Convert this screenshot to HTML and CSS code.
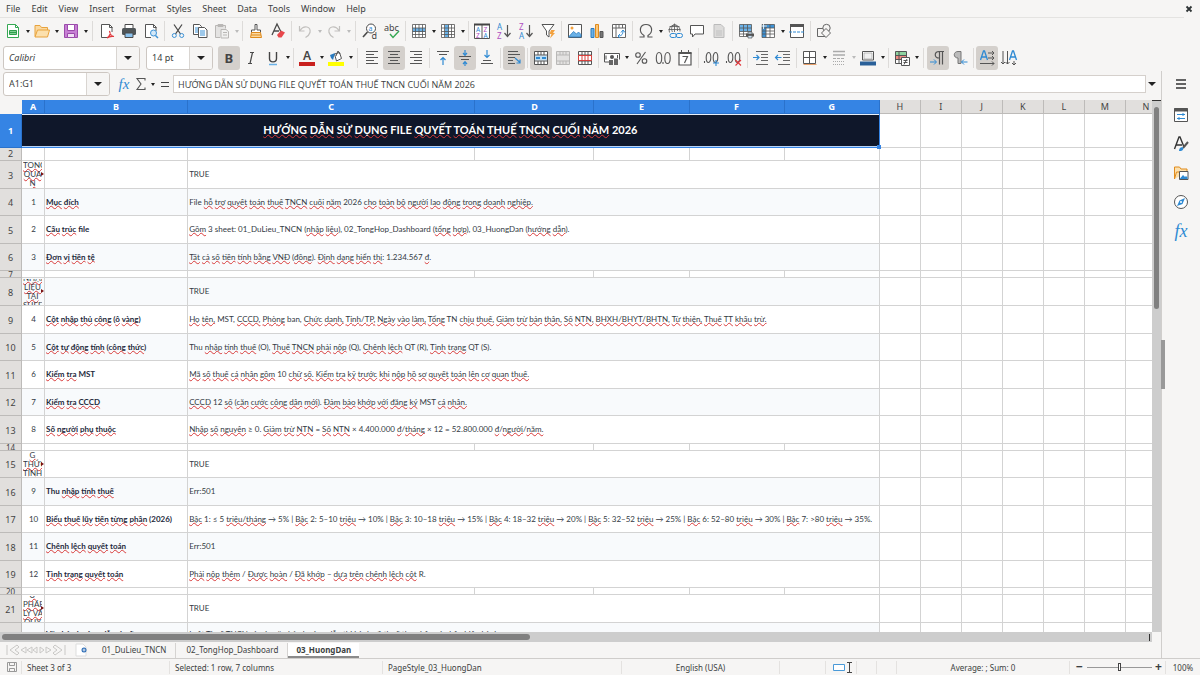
FILE: index.html
```html
<!DOCTYPE html>
<html lang="vi">
<head>
<meta charset="utf-8">
<title>Calc</title>
<link rel="stylesheet" href="styles.css">
</head>
<body>
<nav class="menubar">
<button>File</button><button>Edit</button><button>View</button><button>Insert</button><button>Format</button><button>Styles</button><button>Sheet</button><button>Data</button><button>Tools</button><button>Window</button><button>Help</button>
<button class="close" aria-label="Close document"><svg viewBox="0 0 8 8" class="i8"><path d="M1.500 1.500l5 5M6.500 1.500l-5 5" stroke="#2e3436" stroke-width="1.800"/></svg></button>
</nav>

<div class="toolbar standard" role="toolbar" aria-label="Standard">
<button class="tb" aria-label="New"><svg viewBox="0 0 16 16"><path d="M2.500 1.500h8l3 3v10h-11z" fill="#fff" stroke="#35a853"/><path d="M10.500 1.500v3h3" fill="none" stroke="#35a853"/><path d="M4.500 7.500h7v4h-7zM4.500 9.500h7" fill="#7fd093" stroke="#2f9e4d"/></svg></button><button class="dd" aria-label="New options"></button>
<button class="tb" aria-label="Open"><svg viewBox="0 0 16 16"><path d="M1 13.500v-11h5l1.500 2h6v3" fill="#fbd9a0" stroke="#e8a33d"/><path d="M1 14l2.500-7h12l-2 7z" fill="#fce0ad" stroke="#e8a33d"/></svg></button><button class="dd" aria-label="Open options"></button>
<button class="tb" aria-label="Save"><svg viewBox="0 0 16 16"><path d="M1.500 1.500h13v13h-13z" fill="#c77fd4" stroke="#9b4bab"/><path d="M4.500 1.500h7v6h-7z" fill="#fff" stroke="#9b4bab"/><path d="M4.500 10.500h7v4h-7z" fill="#f0e0f4" stroke="#9b4bab"/></svg></button><button class="dd" aria-label="Save options"></button>
<span class="sep wide"></span>
<button class="tb" aria-label="Export as PDF"><svg viewBox="0 0 16 16"><path d="M9 14.500h-6.500v-13h8l2.500 2.500v5" fill="#fff" stroke="#555"/><path d="M10.500 1.500v3h3" fill="none" stroke="#555"/><path d="M8 15c3-2 3.500-5 2.500-7 .5 4 2 5 4.500 5.500-3-.5-5 0-7 1.500" fill="none" stroke="#e0393e" stroke-width="1.200"/></svg></button>
<button class="tb" aria-label="Print"><svg viewBox="0 0 16 16"><path d="M4 5v-3.500h8v3.500" fill="#fff" stroke="#4a4a4a"/><rect x="1" y="5" width="14" height="7" rx="1.500" fill="#4f5558"/><path d="M4 10h8v4.500h-8z" fill="#8cc3ee" stroke="#4a4a4a"/></svg></button>
<button class="tb" aria-label="Print preview"><svg viewBox="0 0 16 16"><path d="M8 14.500h-5.500v-13h8l2.500 2.500v4" fill="#fff" stroke="#555"/><path d="M10.500 1.500v3h3" fill="none" stroke="#555"/><circle cx="10.500" cy="10" r="3" fill="#d3e8f8" stroke="#3d92d6"/><path d="M12.500 12.500l2.500 2.500" stroke="#3d92d6" stroke-width="1.500"/></svg></button>
<span class="sep"></span>
<button class="tb" aria-label="Cut"><svg viewBox="0 0 16 16" fill="none"><path d="M4 1.500l6.500 9.500M12 1.500l-6.500 9.500" stroke="#4a4a4a" stroke-width="1.300"/><circle cx="4.300" cy="12.500" r="2" stroke="#3d92d6"/><circle cx="11.700" cy="12.500" r="2" stroke="#3d92d6"/></svg></button>
<button class="tb" aria-label="Copy"><svg viewBox="0 0 16 16"><path d="M1.500 1.500h6l2 2v8h-8z" fill="#fff" stroke="#555"/><path d="M3 5h4M3 7h4M3 9h4" stroke="#3d92d6"/><path d="M6.500 4.500h6l2.500 2.500v7.500h-8.500z" fill="#fff" stroke="#555"/><path d="M8 8h5M8 10h5M8 12h5" stroke="#3d92d6"/></svg></button>
<button class="tb" aria-label="Paste"><svg viewBox="0 0 16 16"><path d="M6 14.500h-4.500v-12h10v3M4 1.500h5v2h-5z" fill="#e4e3e2" stroke="#b9b7b5"/><path d="M7 6.500h5l2.500 2v6.500h-7.500zM9 9.500h4M9 12h4" fill="#f1f1f0" stroke="#b9b7b5"/></svg></button><button class="dd off" aria-label="Paste options"></button>
<span class="sep"></span>
<button class="tb" aria-label="Clone formatting"><svg viewBox="0 0 16 16"><path d="M7 1.500h2v5.500h3.500v2.500h-9v-2.500h3.500z" fill="#fff" stroke="#555"/><path d="M3.500 9.500h9l1 5h-11z" fill="#fbd9a0" stroke="#e08b1d"/><path d="M3 12h10" stroke="#e08b1d"/></svg></button>
<button class="tb" aria-label="Clear formatting"><svg viewBox="0 0 16 16"><path d="M2 12l5-11 4 8M4 8h5" fill="none" stroke="#4a4a4a" stroke-width="1.300"/><path d="M7 12l4-4.500 4 2-3.500 5h-3z" fill="#e8484c"/></svg></button>
<span class="sep"></span>
<button class="tb" aria-label="Undo"><svg viewBox="0 0 16 16"><path d="M2.500 3v5h5M3 7.500c4-6 11-4 10 2-.5 2-2 3.500-4.500 5" fill="none" stroke="#c2c0be" stroke-width="1.200"/></svg></button><button class="dd off" aria-label="Undo history"></button>
<button class="tb" aria-label="Redo"><svg viewBox="0 0 16 16"><path d="M13.500 3v5h-5M13 7.500c-4-6-11-4-10 2 .5 2 2 3.500 4.500 5" fill="none" stroke="#c2c0be" stroke-width="1.200"/></svg></button><button class="dd off" aria-label="Redo history"></button>
<span class="sep wide"></span>
<button class="tb" aria-label="Find and replace"><svg viewBox="0 0 16 16"><circle cx="9" cy="5.500" r="4.500" fill="#fff" stroke="#4a4a4a"/><path d="M5.500 9l-4.500 5" stroke="#4a4a4a" stroke-width="1.600"/><text x="6.500" y="8" class="g b" font-size="7">a</text><text x="9.500" y="15.500" class="g" font-size="9">d</text></svg></button>
<button class="tb" aria-label="Spelling"><svg viewBox="0 0 16 16"><text x="0" y="8" class="g" font-size="9">abc</text><path d="M6 11l3 3.500 6-6.500" fill="none" stroke="#35a853" stroke-width="1.400"/></svg></button>
<span class="sep"></span>
<button class="tb" aria-label="Row"><svg viewBox="0 0 16 16"><path d="M1.500 1.500h13v13h-13z" fill="#fff"/><path d="M2 5h12v4h-12z" fill="#6ab1e7"/><path d="M1.500 1.500h13v13h-13zM1.500 5h13M1.500 8.500h13M1.500 11.500h13M4.500 1.500v13M8 1.500v13M11.500 1.500v13" fill="none" stroke="#555" stroke-width=".8"/></svg></button><button class="dd" aria-label="Row options"></button>
<button class="tb" aria-label="Column"><svg viewBox="0 0 16 16"><path d="M1.500 1.500h13v13h-13z" fill="#fff"/><path d="M5 2h4v12h-4z" fill="#6ab1e7"/><path d="M1.500 1.500h13v13h-13zM1.500 5h13M1.500 8.500h13M1.500 11.500h13M4.500 1.500v13M8.500 1.500v13M11.500 1.500v13" fill="none" stroke="#555" stroke-width=".8"/></svg></button><button class="dd" aria-label="Column options"></button>
<span class="sep"></span>
<button class="tb" aria-label="Sort"><svg viewBox="0 0 16 16"><path d="M.5 1.500h15v14h-15zM8 2v13.500" fill="#fff" stroke="#555"/><path d="M0 1.500h16" stroke="#444" stroke-width="2"/><text x="2" y="9" class="g b" font-size="6.500">A</text><text x="2" y="15" class="g p" font-size="6.500">Z</text><text x="9.500" y="9" class="g p" font-size="6.500">Z</text><text x="9.500" y="15" class="g b" font-size="6.500">A</text></svg></button>
<button class="tb" aria-label="Sort ascending"><svg viewBox="0 0 16 16"><text x="1" y="7" class="g b" font-size="8">A</text><text x="1" y="15.500" class="g p" font-size="8">Z</text><path d="M11.500 2v11M8.500 10l3 3.500 3-3.500" fill="none" stroke="#555" stroke-width="1.200"/></svg></button>
<button class="tb" aria-label="Sort descending"><svg viewBox="0 0 16 16"><text x="1" y="7" class="g p" font-size="8">Z</text><text x="1" y="15.500" class="g b" font-size="8">A</text><path d="M11.500 2v11M8.500 10l3 3.500 3-3.500" fill="none" stroke="#555" stroke-width="1.200"/></svg></button>
<button class="tb" aria-label="AutoFilter"><svg viewBox="0 0 16 16"><path d="M2 1.500h12l-5 6.500v6l-2.500-2v-4z" fill="#fff" stroke="#555"/><path d="M11 7h4l-2 3h2l-5 5.500 1.500-4.500h-2z" fill="#f3a13e"/></svg></button>
<span class="sep"></span>
<button class="tb" aria-label="Insert image"><svg viewBox="0 0 16 16"><path d="M1.500 1.500h13v13h-13z" fill="#fff" stroke="#555"/><path d="M2 13.500l4.500-5 3 2.500 2-2 2.500 2.500v2.500h-12z" fill="#6ab1e7" stroke="#2c7cc0" stroke-width=".8"/><circle cx="5" cy="5" r="1.500" fill="#f3a13e"/></svg></button>
<button class="tb" aria-label="Insert chart"><svg viewBox="0 0 16 16"><path d="M2 5.500h3v9h-3z" fill="#6ab1e7" stroke="#2c7cc0"/><path d="M6.500 1.500h3v13h-3z" fill="#fbc77a" stroke="#e08b1d"/><path d="M11 8.500h3v6h-3z" fill="#777" stroke="#555"/></svg></button>
<button class="tb" aria-label="Pivot table"><svg viewBox="0 0 16 16"><path d="M1.500 1.500h13v13h-13zM1.500 5h13M5 1.500v13M8 2v3M11.500 2v3" fill="#fff" stroke="#666"/><path d="M7 13c4 0 5-2 5-5.500M10 9.500l2-2.500 2 2.500M9 11l-2 2 2 2" fill="none" stroke="#2f8ad3"/></svg></button>
<span class="sep"></span>
<button class="tb" aria-label="Special character"><svg viewBox="0 0 16 16"><path d="M1.500 14h4.500v-1.500c-6-4-4-11 2-11s8 7 2 11v1.500h4.500" fill="none" stroke="#555" stroke-width="1.200"/></svg></button><button class="dd" aria-label="Symbols"></button>
<button class="tb" aria-label="Hyperlink"><svg viewBox="0 0 16 16" fill="none"><path d="M2.500 9.500a5.500 5.500 0 1 1 10.500-1M1.500 6.500h12M2.500 3.500h10M7.500 1v8M7.500 1c-4 3-3 6-2 8M7.500 1c3 2 3 4 3 7" stroke="#555" stroke-width=".8"/><rect x="3" y="10.500" width="6.500" height="4" rx="2" stroke="#2f8ad3"/><rect x="9" y="10.500" width="6.500" height="4" rx="2" stroke="#2f8ad3"/></svg></button>
<button class="tb" aria-label="Comment"><svg viewBox="0 0 16 16"><path d="M1.500 2.500h13v8.500h-8.500l-2.500 3v-3h-2z" fill="#fff" stroke="#555"/></svg></button>
<button class="tb" aria-label="Headers and footers"><svg viewBox="0 0 16 16"><path d="M3 1.500h7l3 3v10h-10z" fill="#dcdbda" stroke="#bbb"/><path d="M5 8h6M5 10h6M5 12h6" stroke="#c2c2c2"/></svg></button>
<span class="sep"></span>
<button class="tb" aria-label="Print area"><svg viewBox="0 0 16 16"><path d="M1.500 1.500h12v12h-12z" fill="#fff"/><path d="M1.500 1.500h12v7h-12z" fill="#6ab1e7"/><path d="M1.500 1.500h12v12h-12zM1.500 5h12M1.500 8.500h12M1.500 11h8M5.500 1.500v12M9.500 1.500v7" fill="none" stroke="#555" stroke-width=".8"/><path d="M8 10.500h8v3h-8z" fill="#555"/><path d="M10 9h4v2h-4zM10 12.500h4v2.500h-4z" fill="#cfe5f7" stroke="#555" stroke-width=".7"/></svg></button>
<button class="tb" aria-label="Freeze"><svg viewBox="0 0 16 16"><path d="M2 2h12.500v12.500h-12.500z" fill="#fff"/><path d="M2 1.500h12.500v3.500h-8.500v9.500h-4z" fill="#3d92d6"/><path d="M2 1.500h12.500v13h-12.500zM2 5h12.500M2 8h12.500M2 11h12.500M6 1.500v13M10 1.500v13" fill="none" stroke="#555" stroke-width=".8"/><path d="M3.500 0v6M1 3h6" stroke="#fff" stroke-width=".8"/></svg></button><button class="dd" aria-label="Freeze options"></button>
<button class="tb" aria-label="Split window"><svg viewBox="0 0 16 16"><path d="M1.500 1.500h13v13h-13z" fill="#fff" stroke="#555"/><path d="M1 2.500h14" stroke="#555" stroke-width="3"/><path d="M0 9h16" stroke="#2f8ad3" stroke-dasharray="3 1"/></svg></button>
<span class="sep"></span>
<button class="tb" aria-label="Shapes"><svg viewBox="0 0 16 16"><path d="M1.500 5.500h8v8h-8z" fill="#f6f5f4" stroke="#666"/><circle cx="10.500" cy="5" r="3.700" fill="#f6f5f4" stroke="#666"/><path d="M10 5.500l4.500 4.500-4.500 4.500-4.500-4.500z" fill="#f6f5f4" stroke="#666"/></svg></button>
</div>

<div class="toolbar format" role="toolbar" aria-label="Formatting">
<div class="combo font"><input aria-label="Font name" value="Calibri"><button aria-label="Fonts"></button></div>
<div class="combo size"><input aria-label="Font size" value="14 pt"><button aria-label="Sizes"></button></div>
<button class="tb on" aria-label="Bold"><svg viewBox="0 0 16 16"><text x="3.500" y="13" class="g" font-size="13" font-weight="700">B</text></svg></button>
<button class="tb" aria-label="Italic"><svg viewBox="0 0 16 16"><path d="M7 2.500h4M5 13.500h4M9.500 2.500l-2.500 11" stroke="#4a4a4a" stroke-width="1.200"/></svg></button>
<button class="tb" aria-label="Underline"><svg viewBox="0 0 16 16"><path d="M4.500 2v6.500c0 4.500 7 4.500 7 0v-6.500" fill="none" stroke="#444" stroke-width="1.400"/><path d="M4 14.500h8" stroke="#6ab1e7" stroke-width="1.500"/></svg></button><button class="dd" aria-label="Underline options"></button>
<span class="sep"></span>
<button class="tb" aria-label="Font color"><svg viewBox="0 0 16 16"><text x="4" y="10" class="g" font-size="12" font-weight="600">A</text><path d="M0 12h16v4h-16z" fill="#c9211e"/></svg></button><button class="dd" aria-label="Font colors"></button>
<button class="tb" aria-label="Highlighting"><svg viewBox="0 0 16 16"><path d="M6.500 4l5-1.500 2 6-5 2.500z" fill="#fff" stroke="#555"/><path d="M8 6l2-5 2 3" fill="none" stroke="#555"/><path d="M2 5l5-2-2 7-2-2z" fill="#2c7cc0"/><path d="M0 12h16v4h-16z" fill="#ff0"/></svg></button><button class="dd" aria-label="Highlight colors"></button>
<span class="sep wide"></span>
<button class="tb" aria-label="Align left"><svg viewBox="0 0 16 16"><path d="M2 1.500h12M2 4.500h8M2 7.500h12M2 10.500h8M2 13.500h12" stroke="#555"/></svg></button>
<button class="tb on" aria-label="Center"><svg viewBox="0 0 16 16"><path d="M2 1.500h12M4 4.500h8M2 7.500h12M4 10.500h8M2 13.500h12" stroke="#555"/></svg></button>
<button class="tb" aria-label="Align right"><svg viewBox="0 0 16 16"><path d="M2 1.500h12M6 4.500h8M2 7.500h12M6 10.500h8M2 13.500h12" stroke="#555"/></svg></button>
<span class="sep"></span>
<button class="tb" aria-label="Align top"><svg viewBox="0 0 16 16" fill="none"><path d="M2 1.500h12M4 4.500h8" stroke="#555"/><path d="M8 15v-7.500M5.500 10l2.500-2.500 2.500 2.500" stroke="#2f8ad3" stroke-width="1.200"/></svg></button>
<button class="tb on" aria-label="Center vertically"><svg viewBox="0 0 16 16" fill="none"><path d="M2 6.500h12M4 9.500h8" stroke="#555"/><path d="M8 0v5M6 3l2 2.300 2-2.300M8 16v-4.500M6 14l2-2.300 2 2.300" stroke="#2f8ad3" stroke-width="1.200"/></svg></button>
<button class="tb" aria-label="Align bottom"><svg viewBox="0 0 16 16" fill="none"><path d="M4 10.500h8M2 13.500h12" stroke="#555"/><path d="M8 0v7M5.500 5l2.500 2.500 2.500-2.500" stroke="#2f8ad3" stroke-width="1.200"/></svg></button>
<span class="sep"></span>
<button class="tb on" aria-label="Wrap text"><svg viewBox="0 0 16 16" fill="none"><path d="M2 1.500h10M2 4.500h12M2 7.500h7M2 10.500h5M2 13.500h7" stroke="#555"/><path d="M9 8l5 4.500M14 9.500v3.500h-3.500" stroke="#2f8ad3" stroke-width="1.200"/></svg></button>
<span class="sep"></span>
<button class="tb on" aria-label="Merge and center"><svg viewBox="0 0 16 16"><path d="M1.500 1.500h13v13h-13z" fill="#fff"/><path d="M1.500 5.500h13v5h-13z" fill="#bfdff5"/><path d="M1.500 1.500h13v13h-13zM1.500 5h13M1.500 11h13M5 1.500v3.500M8 1.500v3.500M11 1.500v3.500M5 11v3.500M8 11v3.500M11 11v3.500" fill="none" stroke="#555"/><path d="M3 8h4M9 8h4" stroke="#2f8ad3" stroke-width="1.800"/></svg></button>
<button class="tb" aria-label="Merge cells"><svg viewBox="0 0 16 16"><path d="M1.500 1.500h13v13h-13zM1.500 5h13M1.500 11h13M5 1.500v3.500M8 1.500v3.500M11 1.500v3.500M5 11v3.500M8 11v3.500M11 11v3.500" fill="#e3e2e1" stroke="#b9b8b7"/></svg></button>
<button class="tb" aria-label="Unmerge cells"><svg viewBox="0 0 16 16"><path d="M1.500 1.500h13v13h-13zM1.500 5h13M5 1.500v3.500M8 1.500v3.500M11 1.500v3.500M1.500 11h13M5 11v3.500M8 11v3.500M11 11v3.500" fill="#fff" stroke="#555"/><path d="M1.500 5.500h13v5h-13zM5 5.500v5M8 5.500v5M11 5.500v5" fill="#fff" stroke="#d8403c"/></svg></button>
<span class="sep"></span>
<button class="tb" aria-label="Currency"><svg viewBox="0 0 16 16"><path d="M8 12h-7.500v-8.500h15v6" fill="#fff" stroke="#555"/><circle cx="8" cy="7" r="2" fill="#555"/><path d="M2 5.500v4M13.500 5v3" stroke="#555"/><path d="M5 10h4v5h-4zM10 8.500h4v6.500h-4z" fill="#666"/></svg></button><button class="dd" aria-label="Currencies"></button>
<button class="tb" aria-label="Percent"><svg viewBox="0 0 16 16" fill="none" stroke="#555" stroke-width="1.100"><circle cx="5" cy="5" r="2.300"/><circle cx="11.500" cy="11" r="2.300"/><path d="M12.500 2l-8.500 12"/></svg></button>
<button class="tb" aria-label="Number"><svg viewBox="0 0 16 16" fill="none" stroke="#555" stroke-width="1.100"><ellipse cx="4" cy="8" rx="2.700" ry="5.500"/><ellipse cx="12.500" cy="8" rx="2.700" ry="5.500"/><path d="M8 12v2"/></svg></button>
<button class="tb" aria-label="Date"><svg viewBox="0 0 16 16"><path d="M2 3h12v12h-12z" fill="#fff" stroke="#555" stroke-width="1.200"/><path d="M1.500 3h13" stroke="#555" stroke-width="2"/><path d="M4.500 0v3M11.500 0v3" stroke="#555"/><path d="M5.500 6.500h5l-3 6.500" fill="none" stroke="#555" stroke-width="1.200"/></svg></button>
<span class="sep"></span>
<button class="tb" aria-label="Add decimal place"><svg viewBox="0 0 16 16" fill="none" stroke="#555" stroke-width="1.100"><path d="M.5 11v2"/><ellipse cx="4.500" cy="7.500" rx="2.300" ry="5"/><ellipse cx="11.500" cy="7.500" rx="2.300" ry="5"/><path d="M12 10v6M9 13h6" stroke="#2f8ad3"/></svg></button>
<button class="tb" aria-label="Delete decimal place"><svg viewBox="0 0 16 16" fill="none" stroke="#555" stroke-width="1.100"><path d="M.5 11v2"/><ellipse cx="4.500" cy="7.500" rx="2.300" ry="5"/><ellipse cx="11.500" cy="7.500" rx="2.300" ry="5"/><path d="M9.500 10l5.500 5.500M15 10l-5.500 5.500" stroke="#e0393e"/></svg></button>
<span class="sep"></span>
<button class="tb" aria-label="Increase indent"><svg viewBox="0 0 16 16" fill="none"><path d="M3 1.500h12M8 4.500h7M8 7.500h7M8 10.500h7M3 14.500h12" stroke="#666"/><path d="M0 7.500h6M3.500 5l2.500 2.500-2.500 2.500" stroke="#2f8ad3" stroke-width="1.200"/></svg></button>
<button class="tb" aria-label="Decrease indent"><svg viewBox="0 0 16 16" fill="none"><path d="M3 1.500h12M8 4.500h7M8 7.500h7M8 10.500h7M3 14.500h12" stroke="#666"/><path d="M6.500 7.500h-6M3 5l-2.500 2.500 2.500 2.500" stroke="#2f8ad3" stroke-width="1.200"/></svg></button>
<span class="sep"></span>
<button class="tb" aria-label="Borders"><svg viewBox="0 0 16 16"><path d="M1.500 1.500h12v12h-12zM7.500 1.500v12M1.500 7.500h12" fill="#fff" stroke="#555"/><path d="M1.500 14.500h13" stroke="#e8a06a"/></svg></button><button class="dd" aria-label="Border options"></button>
<button class="tb" aria-label="Border style"><svg viewBox="0 0 16 16" stroke="#aaa"><path d="M2 1.500h12M2 5h12" stroke-width="1.300"/><path d="M2 8.500h12" stroke-dasharray="3 1"/><path d="M2 11.500h12M2 14.500h12" stroke-dasharray="1 1"/></svg></button><button class="dd off" aria-label="Border style options"></button>
<button class="tb" aria-label="Border color"><svg viewBox="0 0 16 16"><path d="M2.500 1.500h11v8.500h-11z" fill="#fff" stroke="#555"/><path d="M4 3h8v6h-8z" fill="#f0f0f0" stroke="#999" stroke-width=".6"/><path d="M0 11.500h16v4h-16z" fill="#2a6099"/></svg></button><button class="dd" aria-label="Border colors"></button>
<span class="sep"></span>
<button class="tb" aria-label="Conditional formatting"><svg viewBox="0 0 16 16"><path d="M1.500 1.500h11v12h-11z" fill="#fff"/><path d="M1.500 1.500h11v4h-11z" fill="#8fd3a0"/><path d="M1.500 5.500h11v4h-11z" fill="#f08c84"/><path d="M1.500 1.500h11v12h-11zM1.500 5.500h11M1.500 9.500h11M5 1.500v12" fill="none" stroke="#555"/><path d="M7.500 7.500h8v8h-8zM9.500 10.500h4M9.500 12.500h4M13 9l-3 5.500" fill="#fff" stroke="#555"/></svg></button><button class="dd" aria-label="Conditional options"></button>
<span class="sep wide"></span>
<button class="tb on" aria-label="Left to right"><svg viewBox="0 0 16 16" fill="none"><path d="M9 8c-5 0-5-6.500 0-6.500h5M9.500 1.500v13M12.500 1.500v13" stroke="#555" stroke-width="1.200"/><path d="M0 12h6M4 9.500l2.500 2.500-2.500 2.500" stroke="#2f8ad3"/></svg></button>
<button class="tb" aria-label="Right to left"><svg viewBox="0 0 16 16"><path d="M6 8c-5 0-5-6.500 0-6.500h3v12h-3z" fill="#bbb" stroke="#777"/><path d="M15.500 12h-6M12 9.500l-2.500 2.500 2.500 2.500" fill="none" stroke="#2f8ad3"/></svg></button>
<span class="sep"></span>
<button class="tb on" aria-label="Text left to right"><svg viewBox="0 0 16 16" fill="none"><path d="M1.500 10l3-9h1l3 9M2.500 7h5" stroke="#2f8ad3" stroke-width="1.300"/><path d="M9 3h6M13 1l2 2-2 2M9 8h6M13 6l2 2-2 2M1 13.500h14M13 11.500l2 2-2 2" stroke="#555"/></svg></button>
<button class="tb" aria-label="Text top to bottom"><svg viewBox="0 0 16 16" fill="none"><path d="M8.500 10l3-9h1l3 9M9.500 7h5" stroke="#2f8ad3" stroke-width="1.300"/><path d="M2 1v13M0 12l2 2 2-2M6.500 1v13M4.500 12l2 2 2-2M13 11v4M11 13l2 2 2-2" stroke="#555"/></svg></button>
</div>

<div class="main">
<main class="work">
<div class="formula">
<div class="combo name"><input aria-label="Name box" value="A1:G1"><button aria-label="Named ranges"></button></div>
<button class="fx" aria-label="Function wizard">fx</button>
<button class="sum" aria-label="Select function"><svg viewBox="0 0 10 12" class="sigma"><path d="M9 2.500v-2h-8l4 5.500-4 5.500h8v-2" fill="none" stroke="#555" stroke-width="1.100"/></svg></button><button class="dd" aria-label="Sum options"></button>
<button class="eq" aria-label="Formula"></button>
<input class="line" aria-label="Input line" value="HƯỚNG DẪN SỬ DỤNG FILE QUYẾT TOÁN THUẾ TNCN CUỐI NĂM 2026">
<button class="expand" aria-label="Expand formula bar"></button>
</div>
<div class="sheetrow">
<div class="sheet">
<table>
<colgroup><col class="ch"><col class="ca"><col class="cb"><col class="cc"><col class="cd"><col class="ce"><col class="ce"><col class="ce"><col class="cx"><col class="cx"><col class="cx"><col class="cx"><col class="cx"><col class="cx"><col class="cx"></colgroup>
<thead><tr><th class="corner"></th><th class="sel">A</th><th class="sel">B</th><th class="sel">C</th><th class="sel">D</th><th class="sel">E</th><th class="sel">F</th><th class="sel">G</th><th>H</th><th>I</th><th>J</th><th>K</th><th>L</th><th>M</th><th>N</th></tr></thead>
<tbody>
<tr class="title"><th class="sel">1</th><td colspan="7" class="banner"><u>HƯỚNG</u> <u>DẪN</u> <u>SỬ</u> <u>DỤNG</u> FILE <u>QUYẾT</u> <u>TOÁN</u> <u>THUẾ</u> <u>TNCN</u> <u>CUỐI</u> <u>NĂM</u> 2026<i class="handle"></i></td><td><td><td><td><td><td><td></tr>
<tr class="blank"><th>2</th><td><td><td><td><td><td><td><td><td><td><td><td><td><td></tr>
<tr class="tall"><th>3</th><td class="sec"><div><u>TỔNG</u><u>QUA</u><u>N</u></div><td><td colspan="5">TRUE<td><td><td><td><td><td><td></tr>
<tr class="mid alt"><th>4</th><td class="no">1<td class="k"><u>Mục</u> <u>đích</u><td colspan="5">File <u>hỗ</u> <u>trợ</u> <u>quyết</u> <u>toán</u> <u>thuế</u> <u>TNCN</u> <u>cuối</u> <u>năm</u> 2026 <u>cho</u> <u>toàn</u> <u>bộ</u> <u>người</u> <u>lao</u> <u>động</u> <u>trong</u> <u>doanh</u> <u>nghiệp.</u><td><td><td><td><td><td><td></tr>
<tr class="tall"><th>5</th><td class="no">2<td class="k"><u>Cấu</u> <u>trúc</u> file<td colspan="5"><u>Gồm</u> 3 sheet: 01_DuLieu_TNCN (<u>nhập</u> <u>liệu</u>), 02_TongHop_Dashboard (<u>tổng</u> <u>hợp</u>), 03_HuongDan (<u>hướng</u> <u>dẫn</u>).<td><td><td><td><td><td><td></tr>
<tr class="mid alt"><th>6</th><td class="no">3<td class="k"><u>Đơn</u> <u>vị</u> <u>tiền</u> <u>tệ</u><td colspan="5"><u>Tất</u> <u>cả</u> <u>số</u> <u>tiền</u> <u>tính</u> <u>bằng</u> <u>VNĐ</u> (<u>đồng</u>). <u>Định</u> <u>dạng</u> <u>hiển</u> <u>thị</u>: 1.234.567 <u>đ</u>.<td><td><td><td><td><td><td></tr>
<tr class="thin"><th>7</th><td><td><td><td><td><td><td><td><td><td><td><td><td><td></tr>
<tr class="tall alt"><th>8</th><td class="sec"><div><u>NHẬP</u><u>LIỆU</u><u>TẠI</u><u>SHEET</u></div><td><td colspan="5">TRUE<td><td><td><td><td><td><td></tr>
<tr class="tall"><th>9</th><td class="no">4<td class="k"><u>Cột</u> <u>nhập</u> <u>thủ</u> <u>công</u> (<u>ô</u> <u>vàng</u>)<td colspan="5"><u>Họ</u> <u>tên,</u> MST, <u>CCCD,</u> <u>Phòng</u> ban, <u>Chức</u> <u>danh,</u> <u>Tỉnh/TP,</u> <u>Ngày</u> <u>vào</u> <u>làm,</u> <u>Tổng</u> TN <u>chịu</u> <u>thuế,</u> <u>Giảm</u> <u>trừ</u> <u>bản</u> <u>thân,</u> <u>Số</u> <u>NTN,</u> <u>BHXH/BHYT/BHTN,</u> <u>Từ</u> <u>thiện,</u> <u>Thuế</u> <u>TT</u> <u>khấu</u> <u>trừ.</u><td><td><td><td><td><td><td></tr>
<tr class="mid alt"><th>10</th><td class="no">5<td class="k"><u>Cột</u> <u>tự</u> <u>động</u> <u>tính</u> (<u>công</u> <u>thức</u>)<td colspan="5">Thu <u>nhập</u> <u>tính</u> <u>thuế</u> (O), <u>Thuế</u> <u>TNCN</u> <u>phải</u> <u>nộp</u> (Q), <u>Chênh</u> <u>lệch</u> QT (R), <u>Tình</u> <u>trạng</u> QT (S).<td><td><td><td><td><td><td></tr>
<tr class="tall"><th>11</th><td class="no">6<td class="k"><u>Kiểm</u> <u>tra</u> MST<td colspan="5"><u>Mã</u> <u>số</u> <u>thuế</u> <u>cá</u> <u>nhân</u> <u>gồm</u> 10 <u>chữ</u> <u>số.</u> <u>Kiểm</u> <u>tra</u> <u>kỹ</u> <u>trước</u> <u>khi</u> <u>nộp</u> <u>hồ</u> <u>sơ</u> <u>quyết</u> <u>toán</u> <u>lên</u> <u>cơ</u> <u>quan</u> <u>thuế.</u><td><td><td><td><td><td><td></tr>
<tr class="mid alt"><th>12</th><td class="no">7<td class="k"><u>Kiểm</u> <u>tra</u> <u>CCCD</u><td colspan="5"><u>CCCD</u> 12 <u>số</u> (<u>căn</u> <u>cước</u> <u>công</u> <u>dân</u> <u>mới</u>). <u>Đảm</u> <u>bảo</u> <u>khớp</u> <u>với</u> <u>đăng</u> <u>ký</u> MST <u>cá</u> <u>nhân.</u><td><td><td><td><td><td><td></tr>
<tr class="tall"><th>13</th><td class="no">8<td class="k"><u>Số</u> <u>người</u> <u>phụ</u> <u>thuộc</u><td colspan="5"><u>Nhập</u> <u>số</u> <u>nguyên</u> ≥ 0. <u>Giảm</u> <u>trừ</u> <u>NTN</u> = <u>Số</u> <u>NTN</u> × 4.400.000 <u>đ</u>/<u>tháng</u> × 12 = 52.800.000 <u>đ</u>/<u>người</u>/<u>năm.</u><td><td><td><td><td><td><td></tr>
<tr class="thin"><th>14</th><td><td><td><td><td><td><td><td><td><td><td><td><td><td></tr>
<tr class="mid"><th>15</th><td class="sec"><div><u>G</u><u>THỨC</u><u>TÍNH</u></div><td><td colspan="5">TRUE<td><td><td><td><td><td><td></tr>
<tr class="tall alt"><th>16</th><td class="no">9<td class="k">Thu <u>nhập</u> <u>tính</u> <u>thuế</u><td colspan="5">Err:501<td><td><td><td><td><td><td></tr>
<tr class="mid"><th>17</th><td class="no">10<td class="k"><u>Biểu</u> <u>thuế</u> <u>lũy</u> <u>tiến</u> <u>từng</u> <u>phần</u> (2026)<td colspan="5"><u>Bậc</u> 1: ≤ 5 <u>triệu/tháng</u> → 5% | <u>Bậc</u> 2: 5–10 <u>triệu</u> → 10% | <u>Bậc</u> 3: 10–18 <u>triệu</u> → 15% | <u>Bậc</u> 4: 18–32 <u>triệu</u> → 20% | <u>Bậc</u> 5: 32–52 <u>triệu</u> → 25% | <u>Bậc</u> 6: 52–80 <u>triệu</u> → 30% | <u>Bậc</u> 7: &gt;80 <u>triệu</u> → 35%.<td><td><td><td><td><td><td></tr>
<tr class="tall alt"><th>18</th><td class="no">11<td class="k"><u>Chênh</u> <u>lệch</u> <u>quyết</u> <u>toán</u><td colspan="5">Err:501<td><td><td><td><td><td><td></tr>
<tr class="mid"><th>19</th><td class="no">12<td class="k"><u>Tình</u> <u>trạng</u> <u>quyết</u> <u>toán</u><td colspan="5"><u>Phải</u> <u>nộp</u> <u>thêm</u> / <u>Được</u> <u>hoàn</u> / <u>Đã</u> <u>khớp</u> – <u>dựa</u> <u>trên</u> <u>chênh</u> <u>lệch</u> <u>cột</u> R.<td><td><td><td><td><td><td></tr>
<tr class="thin"><th>20</th><td><td><td><td><td><td><td><td><td><td><td><td><td><td></tr>
<tr class="tall"><th>21</th><td class="sec"><div><u>Ứ</u><u>PHÁP</u><u>LÝ VÀ</u><u>QUY</u></div><td><td colspan="5">TRUE<td><td><td><td><td><td><td></tr>
<tr class="mid alt peek"><th></th><td><td class="k">Văn bản hướng dẫn thuế<td colspan="5">Luật Thuế TNCN và các văn bản hướng dẫn thi hành về thuế thu nhập cá nhân hiện hành.<td><td><td><td><td><td><td></tr>
</tbody>
</table>
</div>
<div class="vscroll"><i></i></div>
</div>
<div class="hscroll"><i></i><b></b></div>
<div class="tabs">
<svg class="navs" viewBox="0 0 60 12" fill="none" stroke="#c9c8c6"><path d="M1 1v10M11 1l-7 5 7 5 2-2-4-3 4-3zM20 3l-5 3 5 3zM26 3l-5 3 5 3zM31 3v6l-4-3zM34 3v6l4-3zM40 3v6l5-3zM49 1l7 5-7 5-2-2 4-3-4-3zM59 1v10"/></svg>
<button class="add" aria-label="Add sheet"><svg viewBox="0 0 12 14"><path d="M1 1h7l3 3v9h-10z" fill="#fff" stroke="#ddd"/><circle cx="9" cy="7" r="2.500" fill="#2c6cb5"/><path d="M9 5.500v3M7.500 7h3" stroke="#fff" stroke-width=".8"/></svg></button>
<button class="tab">01_DuLieu_TNCN</button><button class="tab">02_TongHop_Dashboard</button><button class="tab active">03_HuongDan</button>
</div>
</main>
<aside class="side">
<button aria-label="Sidebar settings"><svg viewBox="0 0 16 16"><path d="M3 4h10M3 8h10M3 12h10" stroke="#333" stroke-width="1.500"/></svg></button>
<button aria-label="Properties"><svg viewBox="0 0 16 16"><path d="M1.500 1.500h13v13h-13z" fill="#fff" stroke="#555"/><path d="M1 3h14" stroke="#555" stroke-width="3"/><path d="M4 7.500h8M4 11.500h8M10 6v3M6 10v3" stroke="#2f8ad3"/></svg></button>
<button aria-label="Styles"><svg viewBox="0 0 16 16"><path d="M1.500 13l4.500-12h1l4 10M3 9h6" fill="none" stroke="#333" stroke-width="1.400"/><path d="M15 6l-5 6" stroke="#555" stroke-width="2"/><path d="M6 15c0-3 2-4.500 4-3.500 1 2-1 4-4 3.500z" fill="#2f8ad3"/></svg></button>
<button aria-label="Gallery"><svg viewBox="0 0 16 16"><path d="M1.500 14v-12h5l1.500 2h6v3M1.500 14l2-7h3" fill="#fce0ad" stroke="#e08b1d"/><path d="M6.500 6.500h8.500v8h-8.500z" fill="#fff" stroke="#555"/><path d="M7 13.500l3-3.500 2 2 1-1 1.500 1.500v1.500h-7.500z" fill="#2f8ad3"/></svg></button>
<button aria-label="Navigator"><svg viewBox="0 0 16 16"><circle cx="8" cy="8" r="6.500" fill="#fff" stroke="#555"/><path d="M12 4l-2.500 6-5.500 2 2.500-5.500z" fill="#2f8ad3"/><circle cx="8" cy="8" r="1" fill="#fff"/></svg></button>
<button aria-label="Functions" class="fx">fx</button>
<i class="grip"></i>
</aside>
</div>

<footer class="status">
<span class="save"><svg viewBox="0 0 12 12" fill="none" stroke="#999"><path d="M1.500 1.500h9v9h-9zM3.500 1.500v3h5v-3M3.500 10.500v-3h5v3"/></svg></span>
<span class="s1">Sheet 3 of 3</span><span class="s2">Selected: 1 row, 7 columns</span><span class="s3">PageStyle_03_HuongDan</span><span class="s4">English (USA)</span><span class="mode"></span>
<span class="s5"><svg viewBox="0 0 20 12" fill="none"><path d="M1.500 3.500h11v6h-11z" fill="#fff" stroke="#4a9ad8"/><path d="M15 1.500h5M15 11.500h5M17.500 1v10" stroke="#444"/></svg></span><span class="cut"></span><span class="cut"></span>
<span class="s6">Average: ; Sum: 0</span>
<span class="zoom"><button aria-label="Zoom out">−</button><input type="range" aria-label="Zoom" value="50"><button aria-label="Zoom in">+</button></span><span class="pct">100%</span>
</footer>
</body>
</html>
```

FILE: styles.css
```css
* { box-sizing: border-box; }
body { margin: 0; height: 100vh; display: flex; flex-direction: column; overflow: hidden; background: #f6f5f4; color: #3c3f41; font: 9px/12px "Noto Sans", sans-serif; }
button, input { font: inherit; color: inherit; border: 0; background: none; padding: 0; margin: 0; outline: 0; min-width: 0; }
svg { display: block; overflow: visible; }
.menubar { display: flex; align-items: center; gap: 11px; height: 17px; padding: 0 7px 0 6px; flex: none; }
.close { margin-left: auto; }
.i8 { width: 8px; height: 8px; }
.toolbar { display: flex; align-items: center; padding-left: 2px; flex: none; }
.standard { height: 27px; border-top: 1px solid #e4e3e1; margin-right: 16px; }
.format { height: 27px; padding-left: 3px; }
.tb { width: 22px; height: 24px; flex: none; border-radius: 3px; display: flex; align-items: center; justify-content: center; }
.tb svg { width: 16px; height: 16px; }
.tb.on { background: #d4d0cc; }
.dd { width: 7px; height: 22px; flex: none; display: flex; align-items: center; justify-content: center; }
.dd::after, .combo button::after, .expand::after { content: ""; border: solid transparent; border-width: 3px 2px 0; border-top-color: #222; }
.dd.off::after { border-top-color: #bbb; }
.sep { width: 5px; height: 20px; flex: none; background: linear-gradient(#dddbd9, #dddbd9) center / 1px 100% no-repeat; }
.sep.wide { width: 7px; }
.g { fill: #444; font-family: "Noto Sans", sans-serif; }
.g.b { fill: #2f8ad3; }
.g.p { fill: #b04fc0; }
.combo { display: flex; flex: none; height: 24px; border: 1px solid #cdc7c2; border-radius: 3px; background: #fff; overflow: hidden; }
.combo input { flex: 1; padding-left: 5px; }
.combo button { width: 23px; background: #f6f5f4; border-left: 1px solid #d9d5d1; display: flex; align-items: center; justify-content: center; }
.combo button::after, .expand::after { border-width: 4px 4px 0; }
.combo.font { width: 137px; margin-right: 6px; font-style: italic; }
.combo.size { width: 67px; margin-right: 5px; }
.combo.name { width: 107px; }
.main { flex: 1; min-height: 0; display: flex; }
.work { flex: 1; min-width: 0; display: flex; flex-direction: column; }
.formula { display: flex; align-items: center; height: 29px; flex: none; padding-left: 3px; padding-bottom: 3px; }
.fx { font: italic 15px/18px "Liberation Serif", serif; color: #2f8ad3; }
.formula .fx { width: 24px; margin-left: 2px; }
.sum { width: 12px; }
.sigma { width: 10px; height: 12px; }
.sum + .dd { width: 10px; }
.eq { width: 8px; height: 5px; margin: 0 4px 0 3px; border: solid #444; border-width: 1px 0; }
.line { flex: 1; height: 18px; background: #fff; border: 1px solid #d5d0cc; padding-left: 4px; font-family: "Open Sans", "Noto Sans", sans-serif; }
.expand { width: 15px; height: 18px; padding-right: 3px; display: flex; align-items: center; justify-content: center; }
.sheetrow { flex: 1; min-height: 0; display: flex; }
.sheet { flex: 1; min-width: 0; overflow: hidden; background: #fff; }
table { table-layout: fixed; width: 1167px; border-collapse: separate; border-spacing: 0; font: 8px/12px Lato, "Noto Sans", sans-serif; color: #333a44; }
.ch { width: 22px; } .ca { width: 23px; } .cb { width: 143px; } .cc { width: 287px; } .cd { width: 119px; } .ce { width: 95px; } .cx { width: 41px; }
th, td { padding: 0; white-space: nowrap; overflow: hidden; line-height: 6px; border: solid #d3d3d3; border-width: 0 1px 1px 0; }
th { background: #e1dfdd; border-color: #bdbbb9; font: 9px/6px "Noto Sans", sans-serif; color: #444; }
thead tr { height: 14px; }
thead th.corner { background: #f6f5f4; border-color: #f6f5f4; }
th.sel { background: #3584e4; color: #fff; font-weight: 700; border-color: #2a72cc; }
.title { height: 34px; } .blank { height: 13px; } .tall { height: 28px; } .mid { height: 27px; } .thin { height: 7px; }
.tall th, .mid th { padding-top: 2px; }
.thin th { font-size: 8px; line-height: 5px; }
.tall td, .mid td { padding: 0 0 1px 1px; line-height: 12px; }
.alt td:nth-child(-n+4) { background: #f8fafc; }
.peek td { padding-bottom: 4px; }
.banner { position: relative; overflow: visible; background: #0f172a; color: #fff; text-align: center; font-size: 11px; line-height: 14px; font-weight: 700; padding-bottom: 2px; border-color: #3584e4; box-shadow: inset 0 -1px #b9d4f6, inset 0 1px #e8f0fa; }
.handle { position: absolute; right: -2px; bottom: -2px; width: 4px; height: 4px; background: #3584e4; }
.no { text-align: center; }
.k { font-weight: 700; color: #1e293b; }
.tall td.sec, .mid td.sec { position: relative; padding: 0 2px 0 1px; }
td.sec div { height: 26px; overflow: hidden; display: flex; flex-direction: column; justify-content: center; align-items: safe center; line-height: 9px; }
td.sec u { flex: none; }
td.sec::after { content: ""; position: absolute; right: 0; top: 11px; border: solid transparent; border-width: 2px 0 2px 3px; border-left-color: #7a1010; }
u { text-decoration: underline wavy #d83a3a 1px; text-decoration-skip-ink: none; text-underline-offset: 0; }
.vscroll { width: 9px; background: #cdcdcd; padding: 6px 2px; border-top: 1px solid #333; flex: none; }
.vscroll i { display: block; width: 5px; height: 39%; border-radius: 3px; background: #808080; }
.hscroll { height: 10px; margin-right: 9px; flex: none; display: flex; align-items: center; justify-content: space-between; padding: 0 2px; background: #cdcdcd; }
.hscroll i { width: 46%; height: 6px; border-radius: 3px; background: #808080; }
.hscroll b { width: 1px; height: 7px; background: #333; }
.tabs { display: flex; align-items: center; height: 16px; flex: none; padding-left: 6px; font-size: 8px; }
.navs { width: 60px; height: 12px; margin-right: 9px; }
.add { width: 12px; margin-right: 5px; }
.add svg { width: 12px; height: 14px; }
.tab { height: 15px; padding: 0 9px 0 10px; }
.tab + .tab { border-left: 1px solid #d5d3d1; }
.tab.active { background: #fff; font-weight: 700; box-shadow: inset 0 -2px #8b8b8b; padding: 0 8px; }
.side { position: relative; width: 39px; flex: none; border-left: 1px solid #d0cecc; display: flex; flex-direction: column; align-items: center; gap: 13px; padding-top: 5px; }
.side button { width: 16px; height: 16px; }
.side button:first-child { margin-bottom: 2px; }
.side .fx { line-height: 16px; font-size: 18px; }
.grip { position: absolute; left: -1px; top: 57%; margin-top: -66px; width: 4px; height: 49px; background: #999; }
.status { display: flex; align-items: center; height: 17px; flex: none; border-top: 1px solid #cfcdcb; font-size: 8px; }
.status > span { height: 13px; line-height: 13px; flex: none; border-right: 1px solid #e4e2e0; display: flex; align-items: center; }
.save { width: 22px; padding-left: 6px; }
.save svg { width: 12px; height: 12px; }
.status .s1 { width: 148px; padding-left: 5px; }
.s2 { width: 213px; padding-left: 5px; }
.s3 { width: 239px; padding-left: 5px; }
.status .s4 { flex: 1; justify-content: center; }
.mode { width: 46px; }
.s5 { width: 31px; padding-left: 6px; }
.s5 svg { width: 20px; height: 12px; }
.cut { width: 20px; }
.s6 { width: 173px; justify-content: center; }
.zoom { width: 96px; justify-content: center; gap: 3px; padding-left: 3px; }
.zoom button { width: 8px; font-size: 12px; font-weight: 700; line-height: 12px; }
.zoom input { appearance: none; width: 65px; height: 8px; background: linear-gradient(#999, #999) center / 100% 1px no-repeat; }
.zoom input::-webkit-slider-thumb { appearance: none; width: 3px; height: 8px; background: #fff; border: 1px solid #444; }
.status .pct { width: 34px; border: 0; justify-content: center; }
```
